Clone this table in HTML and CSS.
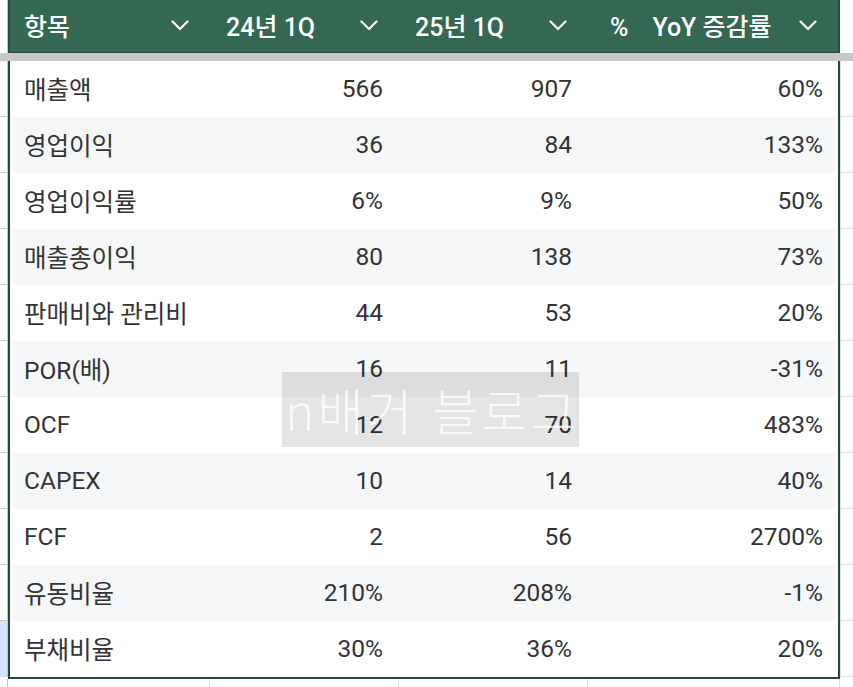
FILE: index.html
```html
<!DOCTYPE html>
<html lang="ko">
<head>
<meta charset="utf-8">
<title>Sheet</title>
<link rel="stylesheet" href="styles.css">
</head>
<body>
<div class="sheet">
  <div class="top">
    <div class="gutter-top"></div>
    <div class="thead">
      <div class="th c1"><span class="lbl">항목</span><svg class="chev" viewBox="0 0 18 11"><polyline points="1.5,1.5 9,9 16.5,1.5"/></svg></div>
      <div class="th c2"><span class="lbl">24년 1Q</span><svg class="chev" viewBox="0 0 18 11"><polyline points="1.5,1.5 9,9 16.5,1.5"/></svg></div>
      <div class="th c3"><span class="lbl">25년 1Q</span><svg class="chev" viewBox="0 0 18 11"><polyline points="1.5,1.5 9,9 16.5,1.5"/></svg></div>
      <div class="th c4"><span class="lbl"><span class="pct">%</span>YoY 증감률</span><svg class="chev" viewBox="0 0 18 11"><polyline points="1.5,1.5 9,9 16.5,1.5"/></svg></div>
    </div>
    <div class="rfill-top"></div>
  </div>
  <div class="freeze"></div>
  <div class="body">
    <div class="gutter">
      <div class="g"></div><div class="g"></div><div class="g"></div><div class="g"></div>
      <div class="g"></div><div class="g"></div><div class="g"></div><div class="g"></div>
      <div class="g"></div><div class="g"></div><div class="g sel"></div>
    </div>
    <div class="tbody">
      <div class="tr"><div class="td c1">매출액</div><div class="td c2">566</div><div class="td c3">907</div><div class="td c4">60%</div></div>
      <div class="tr alt"><div class="td c1">영업이익</div><div class="td c2">36</div><div class="td c3">84</div><div class="td c4">133%</div></div>
      <div class="tr"><div class="td c1">영업이익률</div><div class="td c2">6%</div><div class="td c3">9%</div><div class="td c4">50%</div></div>
      <div class="tr alt"><div class="td c1">매출총이익</div><div class="td c2">80</div><div class="td c3">138</div><div class="td c4">73%</div></div>
      <div class="tr"><div class="td c1">판매비와 관리비</div><div class="td c2">44</div><div class="td c3">53</div><div class="td c4">20%</div></div>
      <div class="tr alt"><div class="td c1">POR(배)</div><div class="td c2">16</div><div class="td c3">11</div><div class="td c4">-31%</div></div>
      <div class="tr"><div class="td c1">OCF</div><div class="td c2">12</div><div class="td c3">70</div><div class="td c4">483%</div></div>
      <div class="tr alt"><div class="td c1">CAPEX</div><div class="td c2">10</div><div class="td c3">14</div><div class="td c4">40%</div></div>
      <div class="tr"><div class="td c1">FCF</div><div class="td c2">2</div><div class="td c3">56</div><div class="td c4">2700%</div></div>
      <div class="tr alt"><div class="td c1">유동비율</div><div class="td c2">210%</div><div class="td c3">208%</div><div class="td c4">-1%</div></div>
      <div class="tr"><div class="td c1">부채비율</div><div class="td c2">30%</div><div class="td c3">36%</div><div class="td c4">20%</div></div>
    </div>
    <div class="rfill">
      <div class="r"></div><div class="r"></div><div class="r"></div><div class="r"></div>
      <div class="r"></div><div class="r"></div><div class="r"></div><div class="r"></div>
      <div class="r"></div><div class="r"></div><div class="r"></div>
    </div>
  </div>
  <div class="below">
    <div class="b-gut"></div>
    <div class="b-cell w1"></div>
    <div class="b-cell w2"></div>
    <div class="b-cell w3"></div>
    <div class="b-cell w4"></div>
    <div class="b-rest"></div>
  </div>
  <div class="watermark">n배거 블로그</div>
</div>
</body>
</html>
```
FILE: styles.css
```css
* { box-sizing: border-box; }
html, body { margin: 0; padding: 0; background: #ffffff; }
.sheet {
  position: relative;
  width: 853px;
  height: 687px;
  overflow: hidden;
  background: #ffffff;
  font-family: Roboto, "Noto Sans CJK KR", sans-serif;
}
.top { display: flex; height: 53px; }
.gutter-top { width: 8px; flex: none; border-right: 1px solid #c4c7c5; }
.thead {
  width: 832px;
  flex: none;
  display: flex;
  background: #356853;
  border-left: 2px solid #244a3b;
  border-right: 2px solid #244a3b;
  border-bottom: 1px solid #244a3b;
}
.rfill-top { flex: 1; }
.th {
  display: flex;
  align-items: center;
  justify-content: space-between;
  color: #ffffff;
  font-size: 25px;
  font-weight: 500;
  padding: 0 21px 0 16px;
  padding-bottom: 2px;
  white-space: nowrap;
}
.th.c1 { padding-left: 14px; }
.c1 { width: 200px; }
.c2 { width: 189px; }
.c3 { width: 189px; }
.c4 { width: 250px; }
.pct { margin-left: 6px; margin-right: 24px; }
.chev { width: 18px; height: 11px; flex: none; }
.chev polyline { fill: none; stroke: #ffffff; stroke-width: 2.2; stroke-linecap: round; stroke-linejoin: round; }

.freeze { height: 8px; background: #c8c8c8; }

.body { display: flex; }
.gutter { width: 8px; flex: none; display: flex; flex-direction: column; }
.g { height: 56px; border-bottom: 1px solid #c4c7c5; border-right: 1px solid #c4c7c5; }
.g.sel { background: #d3e3fd; border-bottom: none; }
.tbody {
  width: 832px;
  flex: none;
  border-left: 2px solid #244a3b;
  border-right: 2px solid #244a3b;
  border-bottom: 2px solid #244a3b;
}
.tr { display: flex; height: 56px; background: #ffffff; }
.tr.alt { background: #f6f7f9; }
.td {
  display: flex;
  align-items: center;
  justify-content: flex-end;
  font-size: 24.5px;
  color: #333333;
  padding-right: 16px;
  padding-bottom: 2px;
  white-space: nowrap;
}
.td.c1 { justify-content: flex-start; padding-left: 14px; padding-right: 0; }
.td.c4 { padding-right: 15px; }
.rfill { flex: 1; display: flex; flex-direction: column; }
.r { height: 56px; border-bottom: 1px solid #e1e1e1; border-left: 1px solid #e1e1e1; }

.below { display: flex; height: 10px; }
.b-gut { width: 8px; border-right: 1px solid #c4c7c5; }
.b-cell { border-right: 1px solid #e1e1e1; }
.w1 { width: 202px; }
.w2 { width: 189px; }
.w3 { width: 189px; }
.w4 { width: 252px; }
.b-rest { flex: 1; }

.watermark {
  position: absolute;
  left: 282px;
  top: 372px;
  width: 297px;
  height: 75px;
  background: rgba(0, 0, 0, 0.1);
  color: rgba(255, 255, 255, 0.8);
  font-family: "Noto Sans CJK KR", sans-serif;
  font-weight: 300;
  font-size: 50px;
  line-height: 75px;
  padding-left: 3px;
  white-space: nowrap;
  letter-spacing: 3px;
}
```
